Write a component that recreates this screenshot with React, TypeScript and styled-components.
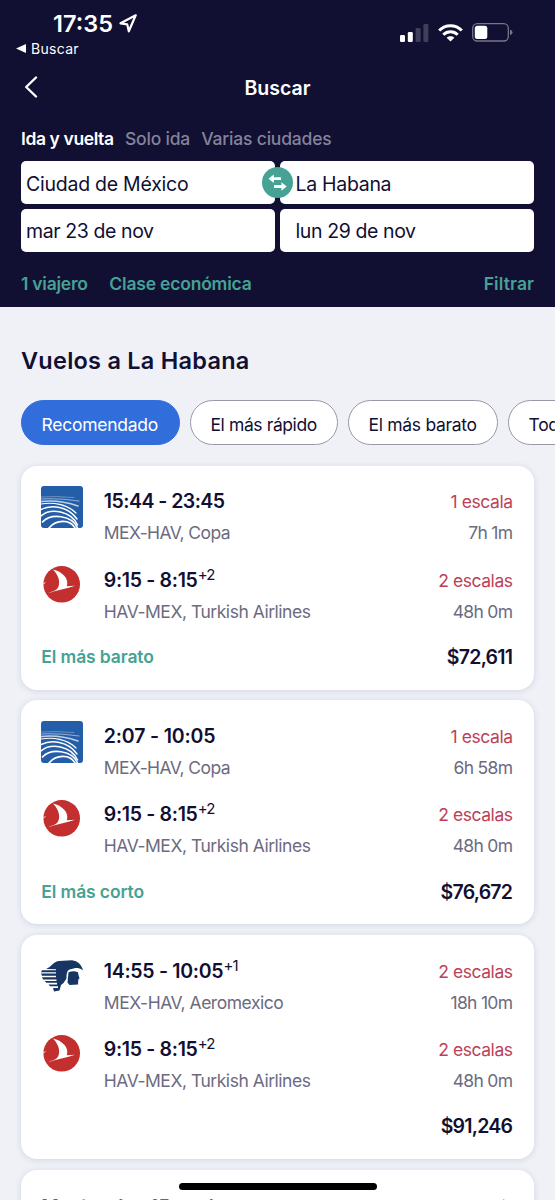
import React from "react";
import styled, { createGlobalStyle } from "styled-components";

const NAVY = "#110f32";
const TEAL = "#45a294";

const GlobalStyle = createGlobalStyle`
  * { box-sizing: border-box; }
  html, body { margin: 0; padding: 0; background: #eff1f7; }
  body { font-family: Inter, "Liberation Sans", sans-serif; color: ${NAVY}; }
`;

const Screen = styled.div`
  position: relative;
  width: 555px;
  height: 1200px;
  overflow: hidden;
  background: #eff1f7;
`;

const Header = styled.header`
  height: 307px;
  background: ${NAVY};
  color: #fff;
  padding: 0 21px;
`;

const StatusBar = styled.div`
  display: flex;
  justify-content: space-between;
  height: 40px;
  padding: 10px 21px 0 32px;
`;

const Clock = styled.div`
  display: flex;
  align-items: center;
  gap: 6px;
  height: 26px;
  font-size: 23.5px;
  font-weight: 600;
`;

const Indicators = styled.div`
  display: flex;
  align-items: center;
  gap: 9px;
  height: 45px;
`;

const Tracked = styled.span<{ $track?: number }>`
  letter-spacing: ${(p) => p.$track ?? 0}px;
  margin-right: ${(p) => -(p.$track ?? 0)}px;
  white-space: nowrap;
`;

const ReturnLink = styled.div`
  display: flex;
  align-items: center;
  gap: 5px;
  height: 17px;
  margin-left: -5px;
  font-size: 14px;
`;

const NavBar = styled.nav`
  display: grid;
  grid-template-columns: 60px 1fr 60px;
  align-items: center;
  height: 62px;
`;

const BackButton = styled.div`
  display: flex;
  padding: 0 0 3px 3px;
`;

const Title = styled.h1`
  margin: 0;
  text-align: center;
  font-size: 19.5px;
  font-weight: 600;
`;

const Tabs = styled.div`
  display: flex;
  align-items: center;
  gap: 11px;
  height: 40px;
  padding-bottom: 2px;
  font-size: 17.5px;
`;

const Tab = styled.div<{ $active?: boolean }>`
  font-weight: ${(p) => (p.$active ? 600 : 500)};
  color: ${(p) => (p.$active ? "#fff" : "#84839a")};
`;

const SearchForm = styled.div`
  position: relative;
  display: grid;
  grid-template-columns: 254px 254px;
  grid-template-rows: 42.7px 42.7px;
  gap: 5px;
  margin-top: 2.4px;
`;

const Field = styled.div<{ $inset?: number }>`
  display: flex;
  align-items: center;
  padding: 2px 0 0 ${(p) => p.$inset ?? 5}px;
  border-radius: 5px;
  background: #fff;
  color: ${NAVY};
  font-size: 19.5px;
`;

const SwapButton = styled.div`
  position: absolute;
  left: 241px;
  top: 6px;
  width: 31px;
  height: 31px;
  border-radius: 50%;
  background: ${TEAL};
`;

const Options = styled.div`
  display: flex;
  gap: 21.5px;
  margin-top: 20.2px;
  line-height: 24px;
  font-size: 17.5px;
  font-weight: 600;
  color: ${TEAL};
`;

const FilterLink = styled.div`
  margin-left: auto;
`;

const Results = styled.main`
  padding: 39px 21px 0;
`;

const Heading = styled.h2`
  margin: 0;
  line-height: 30px;
  font-size: 23.5px;
  font-weight: 600;
`;

const Chips = styled.div`
  display: flex;
  gap: 10.5px;
  margin-top: 24px;
`;

const Chip = styled.div<{ $active?: boolean; $width: number }>`
  display: flex;
  flex: none;
  align-items: center;
  width: ${(p) => p.$width}px;
  height: 45px;
  padding: 3px 0 0 19.5px;
  border: 1.4px solid ${(p) => (p.$active ? "#316ddb" : "#9998a6")};
  border-radius: 23px;
  background: ${(p) => (p.$active ? "#316ddb" : "#fff")};
  color: ${(p) => (p.$active ? "#fff" : NAVY)};
  font-size: 17.5px;
`;

const CardList = styled.div`
  display: flex;
  flex-direction: column;
  gap: 10.7px;
  margin-top: 20.6px;
`;

const Card = styled.article`
  height: 224px;
  padding: 20.6px 21px 0 20.3px;
  border-radius: 16px;
  background: #fff;
  box-shadow: 0 1px 6px rgba(50, 50, 90, 0.14);
`;

const Leg = styled.div`
  display: grid;
  grid-template-columns: 62.5px 1fr auto;
  height: 78.4px;
`;

const LegInfo = styled.div``;

const LegSide = styled.div`
  text-align: right;
`;

const Times = styled.div`
  line-height: 31px;
  font-size: 19.5px;
  font-weight: 600;
`;

const DayOffset = styled.sup`
  position: relative;
  top: -7px;
  vertical-align: baseline;
  line-height: 0;
  font-size: 15px;
  font-weight: 400;
  letter-spacing: -1px;
`;

const Stops = styled.div`
  line-height: 31px;
  font-size: 17.5px;
  color: #bd4156;
`;

const Detail = styled.div`
  line-height: 31px;
  font-size: 17.5px;
  color: #6c6b7f;
`;

const CardFooter = styled.div`
  display: flex;
  justify-content: space-between;
  align-items: center;
  height: 28px;
`;

const Badge = styled.div`
  font-size: 17.5px;
  font-weight: 600;
  color: ${TEAL};
`;

const Price = styled.div`
  font-size: 19.5px;
  font-weight: 600;
`;

const MoreCard = styled(Card)`
  display: flex;
  justify-content: space-between;
  padding: 25px 19px 0 20.3px;
  font-size: 19px;
  font-weight: 600;
  color: #316ddb;
`;

const HomeIndicator = styled.div`
  position: absolute;
  left: 179px;
  top: 1183px;
  width: 198px;
  height: 7px;
  border-radius: 4px;
  background: #000;
`;

const CopaLogo = () => (
  <svg width="42" height="42" viewBox="0 0 42 42">
    <defs>
      <clipPath id="copa"><rect width="42" height="42" rx="3" /></clipPath>
    </defs>
    <g clipPath="url(#copa)">
      <rect width="42" height="42" fill="#255ea8" />
      <g fill="none" stroke="#fff" strokeLinecap="round">
        <path d="M0 11Q15 10 33 11.500" strokeWidth=".8" opacity=".4" />
        <path d="M0 13Q17 12 38 15" strokeWidth="1.2" opacity=".5" />
        <path d="M0 15.500Q18 13.500 37 20" strokeWidth="1.5" opacity=".7" />
        <path d="M0 18C12 16 26 18 35 27" strokeWidth="1.200" />
        <path d="M0 23.500C10 18.500 27 20 36 33" strokeWidth="1.400" />
        <path d="M0 30C10 21.500 30 25 36.500 39" strokeWidth="1.600" />
        <path d="M1.500 36C10 27 31 29 36.500 42" strokeWidth="1.700" />
        <path d="M8 42C15 33.500 29 33 34 42" strokeWidth="1.700" />
      </g>
    </g>
  </svg>
);

const TurkishLogo = () => (
  <svg width="42" height="42" viewBox="0 0 42 42">
    <circle cx="20.700" cy="19.300" r="18.300" fill="#c22f2e" />
    <path d="M12 4.500C21 6.500 28.500 13.500 25.800 21.300L34 20.800C26 23.500 15 25.500 7 28.300C11 26 14 26.300 16 24C20 19.500 18.500 11 12 4.500Z" fill="#fff" />
    <path d="M1.500 19.500L4.500 17.500" stroke="#fff" strokeWidth=".8" fill="none" />
  </svg>
);

const AeromexicoLogo = () => (
  <svg width="43" height="42" viewBox="0 0 43 42">
    <g fill="#163562">
      <path d="M5 13C11 11 11 6 18 5L31 4.300C36.500 5 41 9 42 14.500C40 12.500 37.500 12 34.500 12L28.500 13.500C26 14.500 25.500 18 25.500 22.500L22.500 27L20 29L18.500 34.500L13 35.500L12 32H17V30.300H9L7.500 28.500H16V26.800H5.500L3.500 25H15.500V23.500H2L1 21.300H15V19.800H1L0 17.600H15V16.200H0L1 14.300H15V13.200Z" />
      <path d="M27.500 16.200C31 14.800 34 14.800 37 16.200L37.500 19L38.500 22.500L37.300 23.500L37 28.500L28.500 29L26.500 26.500Z" />
    </g>
  </svg>
);

type Airline = "Copa" | "Turkish Airlines" | "Aeromexico";

const LOGOS: Record<Airline, React.FC> = {
  Copa: CopaLogo,
  "Turkish Airlines": TurkishLogo,
  Aeromexico: AeromexicoLogo,
};

interface LegData {
  times: string;
  timesTrack: number;
  days?: string;
  route: string;
  airline: Airline;
  stops: string;
  duration: string;
}

const RETURN_LEG: LegData = {
  times: "9:15 - 8:15",
  timesTrack: -0.33,
  days: "+2",
  route: "HAV-MEX",
  airline: "Turkish Airlines",
  stops: "2 escalas",
  duration: "48h 0m",
};

const FLIGHTS: { legs: LegData[]; badge?: string; price: string }[] = [
  {
    legs: [{ times: "15:44 - 23:45", timesTrack: -0.53, route: "MEX-HAV", airline: "Copa", stops: "1 escala", duration: "7h 1m" }, RETURN_LEG],
    badge: "El más barato",
    price: "$72,611",
  },
  {
    legs: [{ times: "2:07 - 10:05", timesTrack: -0.15, route: "MEX-HAV", airline: "Copa", stops: "1 escala", duration: "6h 58m" }, RETURN_LEG],
    badge: "El más corto",
    price: "$76,672",
  },
  {
    legs: [{ times: "14:55 - 10:05", timesTrack: -0.3, days: "+1", route: "MEX-HAV", airline: "Aeromexico", stops: "2 escalas", duration: "18h 10m" }, RETURN_LEG],
    price: "$91,246",
  },
];

const FlightLeg = ({ leg }: { leg: LegData }) => {
  const Logo = LOGOS[leg.airline];
  return (
    <Leg>
      <Logo />
      <LegInfo>
        <Times>
          <Tracked $track={leg.timesTrack}>{leg.times}</Tracked>
          {leg.days && <DayOffset>{leg.days}</DayOffset>}
        </Times>
        <Detail><Tracked $track={leg.airline === "Copa" ? -0.6 : -0.47}>{leg.route}, {leg.airline}</Tracked></Detail>
      </LegInfo>
      <LegSide>
        <Stops><Tracked $track={-0.45}>{leg.stops}</Tracked></Stops>
        <Detail><Tracked $track={-0.7}>{leg.duration}</Tracked></Detail>
      </LegSide>
    </Leg>
  );
};

export default function App() {
  return (
    <Screen>
      <GlobalStyle />
      <Header>
        <StatusBar>
          <Clock>
            <Tracked>17:35</Tracked>
            <svg width="18" height="19" viewBox="0 0 18 19" fill="none" stroke="#fff" strokeWidth="2.200" strokeLinejoin="round">
              <path d="M16.700 1.300L1.500 9.300L8.200 10.300L9.800 17.300Z" />
            </svg>
          </Clock>
          <Indicators>
            <svg width="29" height="18" viewBox="0 0 29 18">
              <rect x="0" y="11" width="5" height="7" rx="1.300" fill="#fff" />
              <rect x="7.800" y="8" width="5" height="10" rx="1.300" fill="#fff" />
              <rect x="15.600" y="4" width="5" height="14" rx="1.300" fill="#403e5b" />
              <rect x="23.400" y="0" width="5" height="18" rx="1.300" fill="#403e5b" />
            </svg>
            <svg width="25" height="18" viewBox="0 0 25 18" fill="none" stroke="#fff" strokeWidth="3">
              <path d="M1.200 6.500C7.500 .2 17.500 .2 23.800 6.500" />
              <path d="M5.300 10.700C9.300 6.800 15.700 6.800 19.700 10.700" />
              <path d="M8.700 13.700C10.800 11.800 14.200 11.800 16.300 13.700L12.500 17.500Z" fill="#fff" stroke="none" />
            </svg>
            <svg width="41" height="19" viewBox="0 0 41 19">
              <rect x=".7" y=".7" width="35.600" height="17.300" rx="4.500" fill="none" stroke="#777689" strokeWidth="1.300" />
              <rect x="2.800" y="2.800" width="12.500" height="13.200" rx="2.500" fill="#fff" />
              <path d="M38 6.500Q40.500 7.500 40.500 9.300T38 12.200Z" fill="#777689" />
            </svg>
          </Indicators>
        </StatusBar>
        <ReturnLink>
          <svg width="10" height="9" viewBox="0 0 10 9" fill="#fff"><path d="M0 4.500L10 0V9Z" /></svg>
          <Tracked $track={0.3}>Buscar</Tracked>
        </ReturnLink>
        <NavBar>
          <BackButton>
            <svg width="14" height="22" viewBox="0 0 14 22" fill="none" stroke="#fff" strokeWidth="2.400" strokeLinecap="round" strokeLinejoin="round">
              <path d="M12 1.500L2.200 11L12 20.500" />
            </svg>
          </BackButton>
          <Title><Tracked>Buscar</Tracked></Title>
        </NavBar>
        <Tabs>
          <Tab $active><Tracked $track={-0.4}>Ida y vuelta</Tracked></Tab>
          <Tab><Tracked $track={-0.2}>Solo ida</Tracked></Tab>
          <Tab><Tracked $track={-0.2}>Varias ciudades</Tracked></Tab>
        </Tabs>
        <SearchForm>
          <Field><Tracked $track={-0.25}>Ciudad de México</Tracked></Field>
          <Field $inset={15.5}><Tracked $track={-0.3}>La Habana</Tracked></Field>
          <Field><Tracked $track={-0.4}>mar 23 de nov</Tracked></Field>
          <Field $inset={15.5}><Tracked $track={-0.4}>lun 29 de nov</Tracked></Field>
          <SwapButton>
            <svg width="31" height="31" viewBox="0 0 31 31" fill="#fff">
              <path d="M6.500 11.700L11.800 7.500V10.300H19V13H11.800V15.900Z" />
              <path d="M24.700 19.500L19.400 15.300V18.100H12V20.900H19.400V23.700Z" />
            </svg>
          </SwapButton>
        </SearchForm>
        <Options>
          <Tracked $track={-0.25}>1 viajero</Tracked>
          <Tracked $track={-0.2}>Clase económica</Tracked>
          <FilterLink><Tracked $track={0.1}>Filtrar</Tracked></FilterLink>
        </Options>
      </Header>
      <Results>
        <Heading><Tracked $track={0.25}>Vuelos a La Habana</Tracked></Heading>
        <Chips>
          <Chip $active $width={158.5}><Tracked $track={-0.25}>Recomendado</Tracked></Chip>
          <Chip $width={147.5}><Tracked $track={-0.4}>El más rápido</Tracked></Chip>
          <Chip $width={149.5}><Tracked $track={-0.3}>El más barato</Tracked></Chip>
          <Chip $width={90}><Tracked $track={-0.3}>Todos</Tracked></Chip>
        </Chips>
        <CardList>
          {FLIGHTS.map((f) => (
            <Card key={f.price}>
              {f.legs.map((leg) => <FlightLeg key={leg.route} leg={leg} />)}
              <CardFooter>
                <Badge><Tracked $track={-0.12}>{f.badge}</Tracked></Badge>
                <Price><Tracked $track={-0.76}>{f.price}</Tracked></Price>
              </CardFooter>
            </Card>
          ))}
          <MoreCard>
            <Tracked>Mostrar los 15 vuelos</Tracked>
            <svg width="14" height="26" viewBox="0 0 14 26" fill="none" stroke="#316ddb" strokeWidth="2.200"><path d="M2 5L10 13L2 21" /></svg>
          </MoreCard>
        </CardList>
      </Results>
      <HomeIndicator />
    </Screen>
  );
}
